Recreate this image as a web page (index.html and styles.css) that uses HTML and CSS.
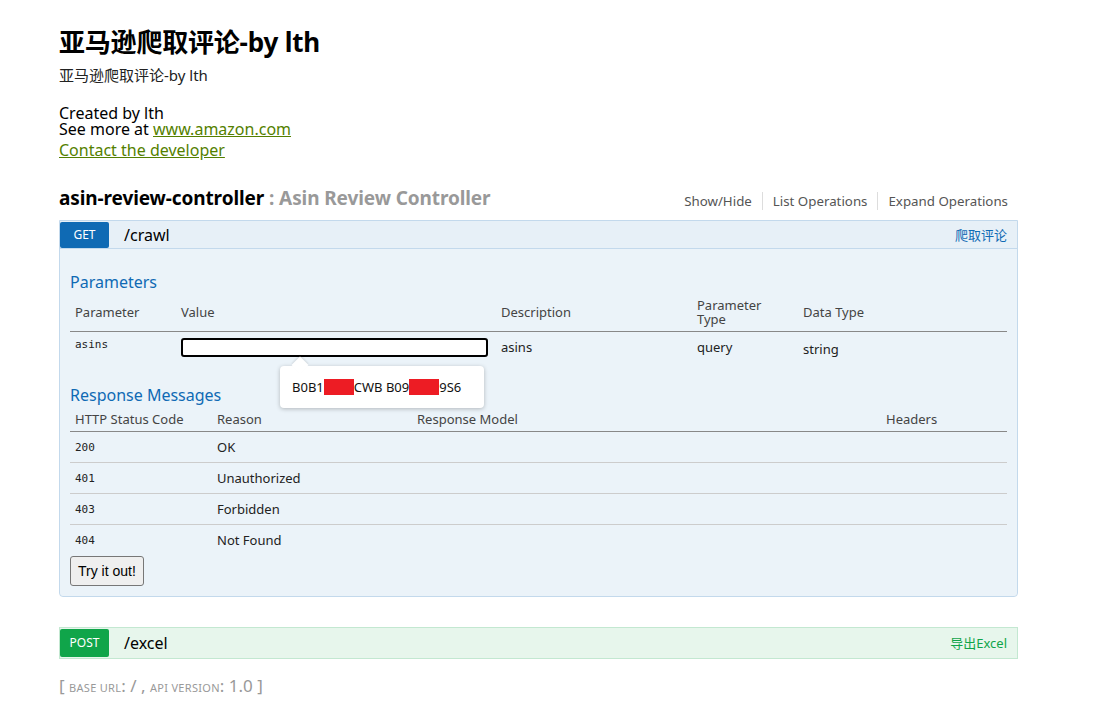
FILE: index.html
```html
<!DOCTYPE html>
<html lang="zh">
<head>
<meta charset="utf-8">
<title>亚马逊爬取评论-by lth</title>
<link rel="stylesheet" href="styles.css">
</head>
<body>
<div class="container">
  <div class="info">
    <h1 class="info-title">亚马逊爬取评论-by lth</h1>
    <div class="info-desc">亚马逊爬取评论-by lth</div>
    <div class="info-meta">
      <div>Created by lth</div>
      <div>See more at <a href="#">www.amazon.com</a></div>
      <div class="contact"><a href="#">Contact the developer</a></div>
    </div>
  </div>

  <div class="resource">
    <div class="resource-head">
      <h2 class="resource-title">asin-review-controller <span class="muted">: Asin Review Controller</span></h2>
      <ul class="resource-links">
        <li>Show/Hide</li>
        <li>List Operations</li>
        <li>Expand Operations</li>
      </ul>
    </div>

    <div class="op op-get">
      <div class="op-head">
        <span class="method">GET</span>
        <span class="path">/crawl</span>
        <span class="summary">爬取评论</span>
      </div>
      <div class="op-body">
        <h4 class="sect">Parameters</h4>
        <table class="tbl params">
          <thead>
            <tr>
              <th class="c-param">Parameter</th>
              <th class="c-value">Value</th>
              <th class="c-desc">Description</th>
              <th class="c-ptype">Parameter<br>Type</th>
              <th class="c-dtype">Data Type</th>
            </tr>
          </thead>
          <tbody>
            <tr>
              <td class="code">asins</td>
              <td><div class="input-wrap"><input class="val-input" type="text"><div class="tip"><span>B0B1</span><span class="redact"></span><span>CWB B09</span><span class="redact"></span><span>9S6</span></div></div></td>
              <td>asins</td>
              <td class="ptype">query</td>
              <td class="dtype">string</td>
            </tr>
          </tbody>
        </table>

        <h4 class="sect sect-resp">Response Messages</h4>
        <table class="tbl resp">
          <thead>
            <tr>
              <th class="r-code">HTTP Status Code</th>
              <th class="r-reason">Reason</th>
              <th class="r-model">Response Model</th>
              <th class="r-head">Headers</th>
            </tr>
          </thead>
          <tbody>
            <tr><td class="code">200</td><td>OK</td><td></td><td></td></tr>
            <tr><td class="code">401</td><td>Unauthorized</td><td></td><td></td></tr>
            <tr><td class="code">403</td><td>Forbidden</td><td></td><td></td></tr>
            <tr><td class="code">404</td><td>Not Found</td><td></td><td></td></tr>
          </tbody>
        </table>
        <button class="try">Try it out!</button>
      </div>
    </div>

    <div class="op op-post">
      <div class="op-head">
        <span class="method">POST</span>
        <span class="path">/excel</span>
        <span class="summary">导出Excel</span>
      </div>
    </div>
  </div>

  <div class="footer">[ <span class="sc">BASE URL</span>: / , <span class="sc">API VERSION</span>: 1.0 ]</div>
</div>
</body>
</html>
```

FILE: styles.css
```css
* { box-sizing: border-box; }
html, body { margin: 0; padding: 0; background: #fff; }
body {
  font-family: "Noto Sans", "Noto Sans CJK SC", sans-serif;
  color: #000;
}
.container {
  width: 1018px;
  padding: 22px 0 0 59px;
}
.info-title {
  margin: 0;
  font-size: 26px;
  font-weight: bold;
  line-height: 40px;
  letter-spacing: -0.2px;
}
.info-desc {
  font-size: 15px;
  line-height: 22px;
  margin-top: 2px;
  color: #222;
}
.info-meta {
  margin-top: 19px;
  font-size: 16px;
  line-height: 16px;
}
.info-meta a { color: #547f00; text-decoration: underline; }
.contact { margin-top: 3px; line-height: 20px; }

.resource { margin-top: 26px; }
.resource-head {
  display: flex;
  justify-content: space-between;
  align-items: flex-end;
  padding-bottom: 10px;
}
.resource-title {
  margin: 0;
  font-size: 19px;
  font-weight: bold;
  line-height: 24px;
  letter-spacing: -0.1px;
}
.resource-title .muted { color: #999; }
.resource-links {
  list-style: none;
  margin: 0;
  padding: 0 10px 0 0;
  display: flex;
  font-size: 13.3px;
  color: #555;
  line-height: 18px;
}
.resource-links li { padding: 0 10px; border-right: 1px solid #ddd; }
.resource-links li:last-child { border-right: none; padding-right: 0; }

.op { border: 1px solid; border-radius: 0; }
.op-head {
  display: flex;
  align-items: center;
  height: 28px;
}
.method {
  width: 49px;
  height: 26px;
  color: #fff;
  font-size: 12px;
  display: flex;
  align-items: center;
  justify-content: center;
  border-radius: 2px;
}
.path { margin-left: 15px; font-size: 16px; flex: 1; }
.summary { font-size: 13px; padding-right: 10px; }

.op-get { background: #e7f0f7; border-color: #c3d9ec; border-radius: 0 0 4px 4px; }
.op-get .method { background: #0f6ab4; }
.op-get .summary { color: #0f6ab4; }
.op-get .op-head { border-bottom: 1px solid #c3d9ec; }
.op-body {
  background: #ebf3f9;
  padding: 22px 10px 10px 10px;
  border-radius: 0 0 4px 4px;
}
.sect {
  margin: 0;
  font-size: 16px;
  font-weight: normal;
  color: #0f6ab4;
  line-height: 22px;
}
.tbl { width: 100%; border-collapse: collapse; font-size: 13px; }
.tbl th {
  text-align: left;
  font-weight: normal;
  color: #444;
  padding: 0 5px;
  border-bottom: 1px solid #888;
}
.params th { height: 38px; vertical-align: middle; }
.params th.c-ptype { line-height: 14px; }
.params td { padding: 6px 5px 6px 5px; vertical-align: top; color: #222; }
.c-param { width: 106px; }
.c-value { width: 320px; }
.c-desc { width: 196px; }
.c-ptype { width: 106px; }
.code { font-family: "DejaVu Sans Mono", monospace; font-size: 11px; }
.input-wrap { position: relative; width: 307px; }
.val-input {
  display: block;
  width: 307px;
  height: 19px;
  border: 2px solid #000;
  border-radius: 3px;
  background: #fff;
  padding: 0;
}
.params td.dtype { padding-top: 8px; }
.tip {
  position: absolute;
  left: 99px;
  top: 28px;
  width: 204px;
  height: 42px;
  background: #fff;
  border-radius: 4px;
  box-shadow: 0 1px 4px rgba(0,0,0,0.25);
  display: flex;
  align-items: center;
  padding-left: 12px;
  font-size: 13px;
  color: #111;
  z-index: 5;
}
.tip::before {
  content: "";
  position: absolute;
  top: -7px;
  left: 14px;
  width: 12px;
  height: 12px;
  background: #fff;
  transform: rotate(45deg);
  box-shadow: -1px -1px 2px rgba(0,0,0,0.1);
}
.redact { display: inline-block; width: 30px; height: 16px; background: #ed1c24; }
.sect-resp { margin-top: 20px; }
.resp th { height: 26px; vertical-align: middle; padding-top: 2px; }
.r-code { width: 142px; }
.r-reason { width: 200px; }
.r-model { width: 469px; }
.resp td { height: 31px; padding: 0 5px; border-bottom: 1px solid #ccc; color: #222; }
.resp tr:last-child td { border-bottom: none; }
.try {
  display: block;
  margin-top: 0;
  font-family: "Liberation Sans", Arial, sans-serif;
  font-size: 14px;
  padding: 0 7px;
  height: 30px;
  border: 1px solid #777;
  border-radius: 3px;
  background: #efefef;
  color: #000;
}

.op-post { margin-top: 30px; background: #e7f6ec; border-color: #c3e8d1; }
.op-post .method { background: #10a54a; height: 28px; }
.op-post .op-head { height: 30px; }
.op-post .summary { color: #10a54a; }

.footer {
  margin-top: 15px;
  font-size: 17px;
  color: #999;
  line-height: 24px;
}
.sc { font-size: 11px; letter-spacing: 0.3px; }
```
